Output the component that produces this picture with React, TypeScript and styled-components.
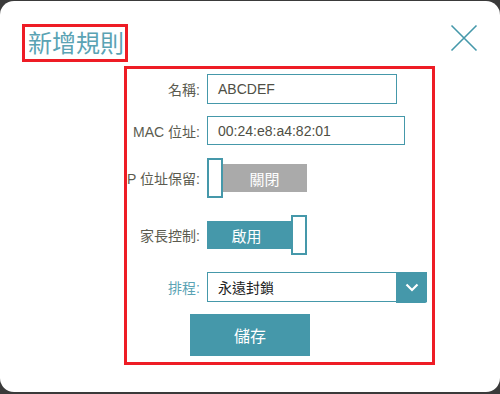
import React from "react";
import styled, { createGlobalStyle } from "styled-components";

const Global = createGlobalStyle`
  html, body { margin: 0; padding: 0; }
  body {
    background: #3a3a3a;
    width: 500px;
    height: 394px;
    overflow: hidden;
    font-family: "Liberation Sans", "Noto Sans CJK TC", sans-serif;
  }
`;

const teal = "#4598aa";
const red = "#ee1c25";

const Dialog = styled.div`
  box-sizing: border-box;
  margin-top: 1px;
  width: 500px;
  height: 391px;
  background: #fff;
  border-radius: 14px;
  padding: 23px 22px 0 22px;
  display: flex;
  flex-direction: column;
`;

const Header = styled.div`
  display: flex;
  align-items: flex-start;
  justify-content: space-between;
`;

const Title = styled.h1`
  box-sizing: border-box;
  margin: 0;
  height: 38px;
  border: 3px solid ${red};
  padding: 0 0 0 3px;
  width: 106px;
  font-family: "Noto Sans CJK TC", sans-serif;
  font-weight: 400;
  font-size: 24px;
  line-height: 30px;
  color: #5aa3b4;
  overflow: hidden;
  white-space: nowrap;
`;

const Close = styled.button`
  margin: 0;
  padding: 0;
  border: 0;
  background: none;
  width: 28px;
  height: 28px;
  svg { display: block; }
`;

const Form = styled.div`
  box-sizing: border-box;
  margin: 4px 0 0 102px;
  width: 311px;
  height: 299px;
  border: 3px solid ${red};
  padding: 5px 0 0 0;
  display: flex;
  flex-direction: column;
`;

const Row = styled.div<{ $mt: number }>`
  display: grid;
  grid-template-columns: 74px auto;
  column-gap: 6px;
  align-items: center;
  margin-top: ${(p) => p.$mt}px;
`;

const Label = styled.div<{ $accent?: boolean }>`
  text-align: right;
  white-space: nowrap;
  direction: rtl;
  overflow: hidden;
  font-size: 14px;
  padding-right: 1px;
  color: ${(p) => (p.$accent ? "#5aa3b4" : "#5b5b4f")};
  font-family: "Liberation Sans", "Noto Sans CJK TC", sans-serif;
`;

const LabelText = styled.span`
  direction: ltr;
  unicode-bidi: isolate;
`;

const TextInput = styled.div<{ $w: number; $h: number }>`
  box-sizing: border-box;
  width: ${(p) => p.$w}px;
  height: ${(p) => p.$h}px;
  border: 1px solid ${teal};
  padding-left: 10px;
  display: flex;
  align-items: center;
  font-size: 14px;
  color: #4f4f45;
`;

const Toggle = styled.div`
  position: relative;
  width: 100px;
  height: 40px;
`;

const Bar = styled.div<{ $on: boolean }>`
  position: absolute;
  top: 6px;
  left: ${(p) => (p.$on ? 0 : 15)}px;
  width: 85px;
  height: 28px;
  background: ${(p) => (p.$on ? teal : "#aaaaaa")};
  color: #fff;
  display: flex;
  align-items: center;
  justify-content: center;
  font-family: "Noto Sans CJK TC", sans-serif;
  font-size: 15px;
  padding-right: ${(p) => (p.$on ? 6 : 0)}px;
  box-sizing: border-box;
`;

const Knob = styled.div<{ $on: boolean }>`
  position: absolute;
  top: 0;
  left: ${(p) => (p.$on ? 84 : 0)}px;
  box-sizing: border-box;
  width: 16px;
  height: 40px;
  background: #fff;
  border: 2px solid ${teal};
`;

const Select = styled.div`
  position: relative;
  box-sizing: border-box;
  width: 220px;
  height: 30px;
  border: 1px solid ${teal};
  padding-left: 10px;
  display: flex;
  align-items: center;
  font-family: "Noto Sans CJK TC", sans-serif;
  font-size: 14px;
  color: #222;
`;

const Arrow = styled.div`
  position: absolute;
  top: -1px;
  right: -1px;
  width: 31px;
  height: 31px;
  background: ${teal};
  border-bottom-right-radius: 2px;
  display: flex;
  align-items: center;
  justify-content: center;
`;

const SaveButton = styled.button`
  margin: 12px 0 0 63px;
  width: 120px;
  height: 42px;
  border: 0;
  background: ${teal};
  color: #fff;
  font-family: "Noto Sans CJK TC", sans-serif;
  font-size: 16px;
  padding: 0;
`;

export default function App() {
  return (
    <>
      <Global />
      <Dialog>
        <Header>
          <Title>新增規則</Title>
          <Close aria-label="close">
            <svg width="28" height="28" viewBox="0 0 28 28">
              <path d="M1.5 1.5 L26.5 26.5 M26.5 1.5 L1.5 26.5" stroke={teal} strokeWidth="1.6" fill="none" />
            </svg>
          </Close>
        </Header>
        <Form>
          <Row $mt={0}>
            <Label><LabelText>名稱:</LabelText></Label>
            <TextInput $w={190} $h={30}>ABCDEF</TextInput>
          </Row>
          <Row $mt={12}>
            <Label><LabelText>MAC 位址:</LabelText></Label>
            <TextInput $w={198} $h={29}>00:24:e8:a4:82:01</TextInput>
          </Row>
          <Row $mt={13}>
            <Label><LabelText>IP 位址保留:</LabelText></Label>
            <Toggle>
              <Bar $on={false}>關閉</Bar>
              <Knob $on={false} />
            </Toggle>
          </Row>
          <Row $mt={17}>
            <Label><LabelText>家長控制:</LabelText></Label>
            <Toggle>
              <Bar $on={true}>啟用</Bar>
              <Knob $on={true} />
            </Toggle>
          </Row>
          <Row $mt={17}>
            <Label $accent><LabelText>排程:</LabelText></Label>
            <Select>
              永遠封鎖
              <Arrow>
                <svg width="14" height="9" viewBox="0 0 14 9">
                  <path d="M1.5 1.5 L7 7 L12.5 1.5" stroke="#fff" strokeWidth="2.2" fill="none" />
                </svg>
              </Arrow>
            </Select>
          </Row>
          <SaveButton>儲存</SaveButton>
        </Form>
      </Dialog>
    </>
  );
}
